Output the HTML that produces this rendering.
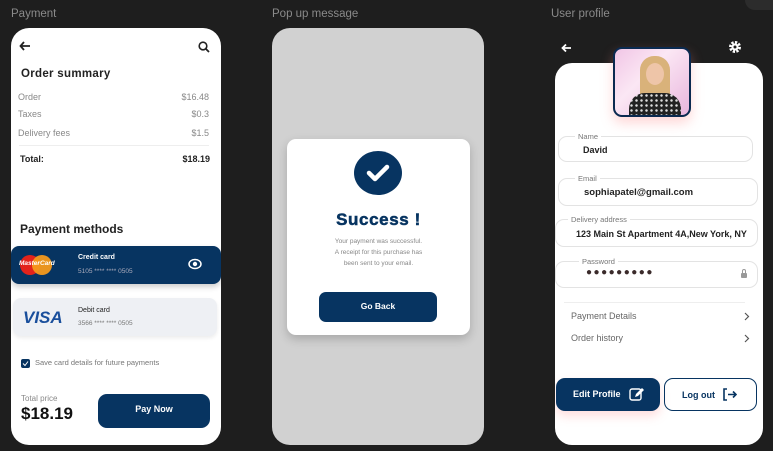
<!DOCTYPE html>
<html><head><style>
*{margin:0;padding:0;box-sizing:border-box}
body{width:773px;height:451px;background:#1e1e1e;font-family:"Liberation Sans",sans-serif;position:relative;overflow:hidden}
.a{position:absolute}
.lbl{color:#8a8a8a;font-size:11.5px;top:8px}
.navy{background:#073461}
</style></head><body>
<div class="a lbl" style="left:11px">Payment</div>
<div class="a lbl" style="left:272px">Pop up message</div>
<div class="a lbl" style="left:551px">User profile</div>
<div class="a" style="left:745px;top:-10px;width:40px;height:20px;border-radius:10px;background:#2c2c2c"></div>

<!-- Payment -->
<div class="a" style="left:11px;top:28px;width:210px;height:417px;background:#fff;border-radius:18px;overflow:hidden">
 <svg class="a" style="left:8px;top:12px" width="12" height="12" viewBox="0 0 12 12"><path d="M11 6H2M5 2L1.5 6 5 10" stroke="#222" stroke-width="1.8" fill="none"/></svg>
 <svg class="a" style="left:187px;top:13px" width="12" height="12" viewBox="0 0 12 12"><circle cx="5" cy="5" r="3.8" stroke="#222" stroke-width="1.6" fill="none"/><path d="M8 8l3 3" stroke="#222" stroke-width="1.8"/></svg>
 <div class="a" style="left:10px;top:40px;font-size:11.5px;font-weight:bold;color:#222;letter-spacing:.3px">Order summary</div>
 <div class="a" style="left:7px;top:64px;font-size:9px;color:#888">Order</div><div class="a" style="right:12px;top:64px;font-size:9px;color:#888">$16.48</div>
 <div class="a" style="left:7px;top:81px;font-size:9px;color:#888">Taxes</div><div class="a" style="right:12px;top:81px;font-size:9px;color:#888">$0.3</div>
 <div class="a" style="left:7px;top:100px;font-size:9px;color:#888">Delivery fees</div><div class="a" style="right:12px;top:100px;font-size:9px;color:#888">$1.5</div>
 <div class="a" style="left:8px;top:117px;width:190px;height:1px;background:#eee"></div>
 <div class="a" style="left:9px;top:126px;font-size:9px;font-weight:bold;color:#222">Total:</div><div class="a" style="right:11px;top:126px;font-size:9px;font-weight:bold;color:#222">$18.19</div>
 <div class="a" style="left:9px;top:194px;font-size:12px;font-weight:bold;color:#222">Payment methods</div>
 <div class="a navy" style="left:0;top:218px;width:210px;height:38px;border-radius:8px;box-shadow:0 3px 6px rgba(0,0,0,.2)">
  <div class="a" style="left:9px;top:9px;width:20px;height:20px;border-radius:50%;background:#e3231b"></div>
  <div class="a" style="left:21px;top:9px;width:20px;height:20px;border-radius:50%;background:#f59a1b;opacity:.95"></div>
  <div class="a" style="left:8px;top:14px;font-size:6.5px;font-style:italic;font-weight:bold;color:#fff">MasterCard</div>
  <div class="a" style="left:67px;top:8px;font-size:7px;font-weight:bold;color:#fff">Credit card</div>
  <div class="a" style="left:67px;top:22px;font-size:6.5px;color:#aab">5105 **** **** 0505</div>
  <svg class="a" style="left:177px;top:12px" width="14" height="12" viewBox="0 0 14 12"><ellipse cx="7" cy="6" rx="6" ry="4.5" stroke="#fff" stroke-width="1.5" fill="none"/><circle cx="7" cy="6" r="2.2" fill="#fff"/></svg>
 </div>
 <div class="a" style="left:2px;top:270px;width:204px;height:38px;border-radius:8px;background:#eef0f4;box-shadow:0 2px 4px rgba(0,0,0,.08)">
  <div class="a" style="left:10px;top:10px;font-size:17px;font-weight:bold;font-style:italic;color:#1a4f9c">VISA</div>
  <div class="a" style="left:65px;top:9px;font-size:7px;color:#222">Debit card</div>
  <div class="a" style="left:65px;top:22px;font-size:6.5px;color:#777">3566 **** **** 0505</div>
 </div>
 <div class="a navy" style="left:10px;top:331px;width:9px;height:9px;border-radius:2px"></div>
 <svg class="a" style="left:11px;top:332px" width="7" height="7"><path d="M1 3.5L3 5.5 6 1.5" stroke="#fff" fill="none"/></svg>
 <div class="a" style="left:24px;top:330px;font-size:7.5px;color:#777">Save card details for future payments</div>
 <div class="a" style="left:10px;top:366px;font-size:8px;color:#888">Total price</div>
 <div class="a" style="left:10px;top:376px;font-size:17px;font-weight:bold;color:#111">$18.19</div>
 <div class="a navy" style="left:87px;top:366px;width:112px;height:34px;border-radius:9px;color:#fff;font-size:9px;font-weight:bold;text-align:center;line-height:30px">Pay Now</div>
</div>

<!-- Popup -->
<div class="a" style="left:272px;top:28px;width:212px;height:417px;background:#d1d1d1;border-radius:18px"></div>
<div class="a" style="left:287px;top:139px;width:183px;height:196px;background:#fff;border-radius:9px;box-shadow:0 4px 10px rgba(0,0,0,.2)">
 <div class="a navy" style="left:67px;top:12px;width:48px;height:44px;border-radius:50%"></div>
 <svg class="a" style="left:78px;top:22px" width="26" height="24"><path d="M4 12l6 6L22 6" stroke="#fff" stroke-width="4.5" fill="none" stroke-linecap="round" stroke-linejoin="round"/></svg>
 <div class="a" style="left:0;width:183px;top:71px;text-align:center;font-size:17px;font-weight:900;color:#073461;letter-spacing:.6px;-webkit-text-stroke:.5px #073461">Success !</div>
 <div class="a" style="left:0;width:183px;top:97px;text-align:center;font-size:6.5px;line-height:11px;color:#888">Your payment was successful.<br>A receipt for this purchase has<br>been sent to your email.</div>
 <div class="a navy" style="left:32px;top:153px;width:118px;height:30px;border-radius:7px;color:#fff;font-size:8.5px;font-weight:bold;text-align:center;line-height:29px">Go Back</div>
</div>

<!-- Profile -->
<svg class="a" style="left:561px;top:43px" width="11" height="10" viewBox="0 0 11 10"><path d="M10 5H2M5 1.5L1.5 5 5 8.5" stroke="#fff" stroke-width="1.8" fill="none"/></svg>
<svg class="a" style="left:728px;top:40px" width="14" height="14" viewBox="0 0 14 14"><circle cx="7" cy="7" r="4.5" fill="none" stroke="#fff" stroke-width="3" stroke-dasharray="2.2 1.3"/><circle cx="7" cy="7" r="3.6" fill="#fff"/><circle cx="7" cy="7" r="1.5" fill="#1e1e1e"/></svg>
<div class="a" style="left:555px;top:63px;width:208px;height:382px;background:#fff;border-radius:17px;overflow:hidden">
 <div class="a" style="left:3px;top:73px;width:195px;height:26px;border:1px solid #e3e3e3;border-radius:9px"></div>
 <div class="a" style="left:20px;top:69px;font-size:7.5px;color:#777;background:#fff;padding:0 3px">Name</div>
 <div class="a" style="left:28px;top:82px;font-size:9px;font-weight:bold;color:#222">David</div>
 <div class="a" style="left:3px;top:115px;width:200px;height:28px;border:1px solid #e3e3e3;border-radius:9px"></div>
 <div class="a" style="left:20px;top:111px;font-size:7.5px;color:#777;background:#fff;padding:0 3px">Email</div>
 <div class="a" style="left:29px;top:124px;font-size:9.5px;font-weight:bold;color:#222">sophiapatel@gmail.com</div>
 <div class="a" style="left:0;top:156px;width:203px;height:28px;border:1px solid #e3e3e3;border-radius:9px"></div>
 <div class="a" style="left:13px;top:152px;font-size:7.5px;color:#777;background:#fff;padding:0 3px">Delivery address</div>
 <div class="a" style="left:21px;top:166px;font-size:9px;font-weight:bold;color:#222;white-space:nowrap">123 Main St Apartment 4A,New York, NY</div>
 <div class="a" style="left:0;top:198px;width:203px;height:27px;border:1px solid #e3e3e3;border-radius:9px"></div>
 <div class="a" style="left:24px;top:194px;font-size:7.5px;color:#777;background:#fff;padding:0 3px">Password</div>
 <div class="a" style="left:31px;top:204px;font-size:10px;color:#3a2a2a;letter-spacing:1.5px">●●●●●●●●●</div>
 <div class="a" style="left:186px;top:210px;width:6px;height:5px;background:#999;border-radius:1px"></div>
 <div class="a" style="left:187px;top:206px;width:4px;height:5px;border:1px solid #999;border-radius:2px 2px 0 0"></div>
 <div class="a" style="left:9px;top:239px;width:181px;height:1px;background:#eee"></div>
 <div class="a" style="left:16px;top:248px;font-size:9px;color:#666">Payment Details</div>
 <div class="a" style="left:16px;top:270px;font-size:9px;color:#666">Order history</div>
 <svg class="a" style="left:189px;top:249px" width="6" height="9"><path d="M1 1l3.5 3.5L1 8" stroke="#555" stroke-width="1.2" fill="none"/></svg>
 <svg class="a" style="left:189px;top:271px" width="6" height="9"><path d="M1 1l3.5 3.5L1 8" stroke="#555" stroke-width="1.2" fill="none"/></svg>
 <div class="a navy" style="left:1px;top:315px;width:104px;height:33px;border-radius:9px;box-shadow:0 5px 10px rgba(255,120,120,.25)">
  <div class="a" style="left:17px;top:11px;font-size:9px;font-weight:bold;color:#fff">Edit Profile</div>
  <svg class="a" style="left:73px;top:9px" width="15" height="15" viewBox="0 0 15 15"><rect x="1" y="2" width="11" height="11" rx="2" stroke="#fff" stroke-width="1.4" fill="none"/><path d="M6 10l1-3 6-6 2 2-6 6z" fill="#fff"/></svg>
 </div>
 <div class="a" style="left:109px;top:315px;width:93px;height:33px;border:1.5px solid #073461;border-radius:9px">
  <div class="a" style="left:17px;top:11px;font-size:9px;font-weight:bold;color:#073461">Log out</div>
  <svg class="a" style="left:57px;top:9px" width="15" height="13" viewBox="0 0 15 13"><path d="M5 1H2v11h3M6 6.5h8M11 3.5l3 3-3 3" stroke="#073461" stroke-width="1.6" fill="none"/></svg>
 </div>
</div>
<div class="a" style="left:613px;top:47px;width:78px;height:70px;border:2px solid #0b2a50;border-radius:9px;overflow:hidden;box-shadow:0 6px 12px rgba(255,140,140,.35);background:linear-gradient(135deg,#f1c6e6,#fbe7f4 40%,#e9b5dd)">
 <div class="a" style="left:25px;top:7px;width:30px;height:50px;border-radius:14px 14px 6px 6px;background:#d9b27a"></div>
 <div class="a" style="left:31px;top:14px;width:18px;height:22px;border-radius:50%;background:#eec5a8"></div>
 <div class="a" style="left:14px;top:44px;width:52px;height:30px;border-radius:16px 16px 0 0;background:#222 radial-gradient(#ddd 1px,transparent 1.5px) 0 0/5px 5px"></div>
</div>
</body></html>
